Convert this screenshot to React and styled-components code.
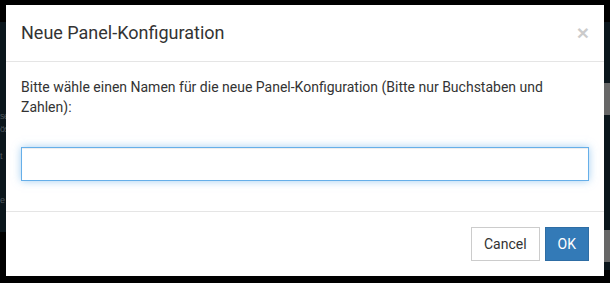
import React from "react";
import styled, { createGlobalStyle } from "styled-components";

const Global = createGlobalStyle`
  html, body { margin: 0; padding: 0; background: #000; }
  body { font-family: Roboto, "Liberation Sans", Arial, sans-serif; }
  * { box-sizing: border-box; }
`;

const Screen = styled.div`
  position: relative;
  width: 610px;
  height: 283px;
  overflow: hidden;
  background: #000;
`;

const TopBar = styled.div`
  height: 22px;
  background: #000;
`;

const Workspace = styled.div`
  display: flex;
  justify-content: space-between;
  align-items: flex-start;
`;

const SideColumn = styled.div`
  width: 300px;
  height: 210px;
  background: #0b161c;
  padding-top: 88px;
  display: flex;
  flex-direction: column;
  align-items: flex-start;
`;

const GhostText = styled.span`
  display: block;
  width: fit-content;
  font-family: "Liberation Sans Narrow", "Liberation Sans", sans-serif;
  font-size: 9px;
  line-height: 12px;
  letter-spacing: -0.5px;
  color: #4e575c;
  white-space: nowrap;
  margin-top: ${(p) => p.$mt || 0}px;
`;

const RightColumn = styled.div`
  width: 300px;
  height: 248px;
  background: #0b161c;
  display: flex;
  flex-direction: column;
  align-items: flex-end;
  padding-top: 61px;
`;

const GhostBlock = styled.div`
  width: 60px;
  height: 32px;
  background: #676767;
  margin-top: ${(p) => p.$mt || 0}px;
`;

const Modal = styled.div`
  position: absolute;
  left: 6px;
  top: 5px;
  width: 598px;
  height: 271px;
  background: #fff;
  color: #333;
  display: flex;
  flex-direction: column;
`;

const Header = styled.div`
  display: flex;
  align-items: flex-start;
  justify-content: space-between;
  padding: 15px;
  border-bottom: 1px solid #e5e5e5;
`;

const Title = styled.h4`
  margin: 0;
  font-size: 18px;
  font-weight: 400;
  line-height: 1.42857;
  color: #333;
`;

const Close = styled.button`
  border: 0;
  background: transparent;
  padding: 0;
  margin-top: 2px;
  font-family: "Helvetica Neue", "Liberation Sans", Arial, sans-serif;
  font-size: 21px;
  font-weight: 700;
  line-height: 1;
  color: #000;
  opacity: 0.2;
  cursor: pointer;
`;

const Body = styled.div`
  padding: 15px;
`;

const Prompt = styled.p`
  margin: 0 0 30px;
  font-size: 14px;
  line-height: 20px;
  color: #333;
`;

const Field = styled.input`
  display: block;
  width: 100%;
  height: 34px;
  margin: 0 0 15px;
  padding: 6px 12px;
  font-family: inherit;
  font-size: 14px;
  color: #555;
  background: #fff;
  border: 1px solid #66afe9;
  border-radius: 0;
  outline: 0;
  box-shadow: inset 0 1px 1px rgba(0, 0, 0, 0.075), 0 0 8px rgba(102, 175, 233, 0.6);
`;

const Footer = styled.div`
  display: flex;
  justify-content: flex-end;
  gap: 5px;
  padding: 15px;
  border-top: 1px solid #e5e5e5;
`;

const Button = styled.button`
  height: 34px;
  padding: 6px 12px;
  font-family: inherit;
  font-size: 14px;
  line-height: 20px;
  border-radius: 0;
  border: 1px solid ${(p) => (p.$primary ? "#2e6da4" : "#ccc")};
  background: ${(p) => (p.$primary ? "#337ab7" : "#fff")};
  color: ${(p) => (p.$primary ? "#fff" : "#333")};
  cursor: pointer;
`;

export default function App() {
  return (
    <Screen>
      <Global />
      <TopBar />
      <Workspace>
        <SideColumn>
          <GhostText>se</GhostText>
          <GhostText $mt={1}>ös</GhostText>
          <GhostText $mt={15}>t</GhostText>
          <GhostText $mt={32}>e</GhostText>
        </SideColumn>
        <RightColumn>
          <GhostBlock />
          <GhostBlock $mt={115} />
        </RightColumn>
      </Workspace>
      <Modal role="dialog">
        <Header>
          <Title>Neue Panel-Konfiguration</Title>
          <Close aria-label="Close">×</Close>
        </Header>
        <Body>
          <Prompt>
            Bitte wähle einen Namen für die neue Panel-Konfiguration (Bitte nur Buchstaben und Zahlen):
          </Prompt>
          <Field type="text" autoFocus />
        </Body>
        <Footer>
          <Button>Cancel</Button>
          <Button $primary>OK</Button>
        </Footer>
      </Modal>
    </Screen>
  );
}
